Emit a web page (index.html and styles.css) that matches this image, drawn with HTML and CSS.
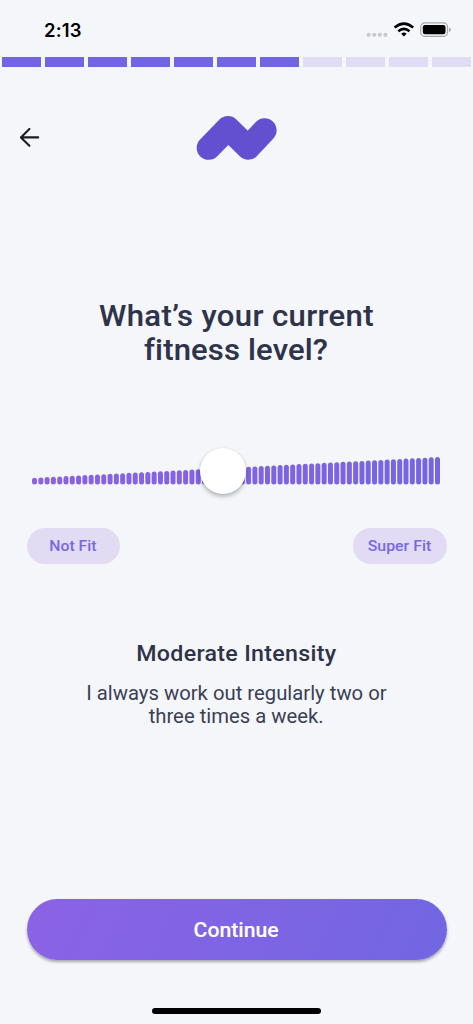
FILE: index.html
```html
<!DOCTYPE html>
<html lang="en">
<head>
<meta charset="utf-8">
<meta name="viewport" content="width=device-width, initial-scale=1">
<title>Fitness level</title>
<link rel="stylesheet" href="styles.css">
</head>
<body>
<main class="screen">
  <div class="status">
    <span class="time">2:13</span>
    <svg class="status-icons" width="86" height="18" viewBox="0 0 86 18" aria-hidden="true">
      <g fill="#c8c9cd"><circle cx="2.7" cy="13.8" r="2.1"/><circle cx="8.2" cy="13.8" r="2.1"/><circle cx="13.8" cy="13.8" r="2.1"/><circle cx="19.4" cy="13.8" r="2.1"/></g>
      <g fill="none" stroke="#000" stroke-width="2.6"><path d="M28.6 6.5Q37.9-1.3 47.2 6.5"/><path d="M32.3 10.2Q37.9 5.6 43.5 10.2"/></g>
      <path d="M35.2 12.7Q37.9 10.3 40.6 12.7L37.9 15.5Z"/>
      <rect x="54.7" y="1.9" width="26.8" height="13.4" rx="4" fill="none" stroke="#a6a7aa" stroke-width="1.2"/>
      <rect x="56.8" y="4" width="22.7" height="9.3" rx="2.2"/>
      <path d="M83 6.4Q85 7.1 85 8.7T83 11Z" fill="#a6a7aa"/>
    </svg>
  </div>
  <div class="progress">
    <i class="on"></i><i class="on"></i><i class="on"></i><i class="on"></i><i class="on"></i><i class="on"></i><i class="on"></i><i></i><i></i><i></i><i></i>
  </div>
  <header class="top">
    <svg class="back" width="21" height="20" viewBox="0 0 21 20" aria-label="Back"><path d="M19.2 9.4H1.9M10.4 1 1.9 9.4l8.5 8.4" fill="none" stroke="#1d1d1f" stroke-width="2.1" stroke-linecap="round" stroke-linejoin="round"/></svg>
    <svg class="logo" width="82" height="46" viewBox="0 0 82 46" aria-label="Logo"><path d="M12.7 32.8 32 13 52.2 32.8 68.6 15.2" fill="none" stroke="#6350d0" stroke-width="24" stroke-linecap="round" stroke-linejoin="round"/></svg>
  </header>
  <h1 class="title"><span class="fit t1">What’s your current</span><br><span class="fit t2">fitness level?</span></h1>
  <div class="slider">
    <svg class="bars" width="408" height="45" viewBox="0 0 408 45" aria-hidden="true"></svg>
    <div class="thumb"></div>
  </div>
  <div class="labels"><span class="pill"><span class="fit p1">Not Fit</span></span><span class="pill"><span class="fit p2">Super Fit</span></span></div>
  <h2 class="level"><span class="fit lv">Moderate Intensity</span></h2>
  <p class="desc"><span class="fit ds">I always work out regularly two or</span><br><span class="fit ds">three times a week.</span></p>
  <button class="continue" type="button"><span class="fit ct">Continue</span></button>
  <div class="home"></div>
</main>
<script src="bars.js"></script>
</body>
</html>
```
FILE: styles.css
```css
* { box-sizing: border-box; }
body { margin: 0; background: #f4f6fa; }
.screen {
  display: flex; flex-direction: column; align-items: stretch;
  width: 473px; height: 1024px; overflow: hidden;
  background: #f4f6fa; color: #2f3349;
  font-family: Roboto, "Liberation Sans", sans-serif; font-weight: 500;
}
.fit { display: inline-block; }
.status {
  display: flex; justify-content: space-between; align-items: flex-start;
  height: 57px; padding: 21px 21px 0 44px;
}
.time { font: 600 18.5px/19px Inter, "Liberation Sans", sans-serif; color: #000; letter-spacing: 0.2px; }
.status-icons { display: block; }
.progress { display: flex; gap: 4.4px; height: 10px; padding: 0 2.3px; }
.progress i { flex: 1; background: #e0dcf4; }
.progress .on { background: #7165e2; }
.top { display: grid; grid-template-columns: 177px 82px; align-items: center; padding: 48px 0 0 18.5px; height: 94px; }
.back, .logo { display: block; }
.title { margin: 137px 0 0; font-size: 29px; line-height: 34px; font-weight: 500; text-align: center; white-space: nowrap; -webkit-text-stroke: .1px #2f3349; }
.t1 { letter-spacing: .36px; transform: scaleX(1.07) translateY(.6px); }
.t2 { letter-spacing: .15px; transform: scaleX(1.07) translateY(.6px); }
.slider { position: relative; height: 60px; margin-top: 74px; padding-left: 32px; }
.bars { display: block; }
.thumb {
  position: absolute; left: 200px; top: 7.5px; width: 46px; height: 46px; border-radius: 50%;
  background: #fff; box-shadow: 0 2.5px 4px rgba(0,0,0,.27), 0 0 2px rgba(0,0,0,.08);
}
.labels { display: flex; justify-content: space-between; margin-top: 28px; padding: 0 26.5px; }
.pill {
  width: 93.5px; height: 36px; border-radius: 18px; background: #e1dcf4; color: #7768e6;
  font-size: 15px; line-height: 36px; text-align: center; white-space: nowrap;
}
.p1 { transform: scaleX(1.05) translateX(-.5px); }
.p2 { transform: scaleX(1.06) translateX(-.5px); }
.level { margin: 76px 0 0; font-size: 22px; line-height: 28px; font-weight: 500; text-align: center; white-space: nowrap; }
.lv { letter-spacing: .28px; transform: scaleX(1.055) translateX(-.5px); }
.desc { margin: 14px 0 0; font-size: 19.5px; line-height: 23px; font-weight: 400; color: #3b3f55; text-align: center; white-space: nowrap; }
.ds { transform: scaleX(1.04); }
.continue {
  height: 61px; margin: 171px 26.5px 0; padding: 0; border: 0; border-radius: 31px;
  background: linear-gradient(115deg, #8b63e4, #7266e2); box-shadow: 0 2px 3px rgba(0,0,0,.33);
  color: #fff; font: 500 20px/61px Roboto, "Liberation Sans", sans-serif;
}
.ct { transform: scaleX(1.06) translateY(.5px); -webkit-text-stroke: .1px #fff; }
.home { width: 169px; height: 6px; margin: 48px auto 0; border-radius: 3px; background: #000; }
```
FILE: bars.js
```js
const bars = document.querySelector('.bars');
const count = 65;
const barWidth = 5;
const baseline = 44.4;
const mix = (a, b, t) => Math.round(a + (b - a) * t);
for (let n = 0; n < count; n++) {
  const t = n / (count - 1);
  const height = 6.7 + 20.7 * t;
  const bar = document.createElementNS('http://www.w3.org/2000/svg', 'rect');
  bar.setAttribute('x', (408 - barWidth) * t);
  bar.setAttribute('y', baseline - height);
  bar.setAttribute('width', barWidth);
  bar.setAttribute('height', height);
  bar.setAttribute('rx', barWidth / 2);
  bar.setAttribute('fill', `rgb(${mix(139, 117, t)}, ${mix(98, 101, t)}, 227)`);
  bars.append(bar);
}
```
